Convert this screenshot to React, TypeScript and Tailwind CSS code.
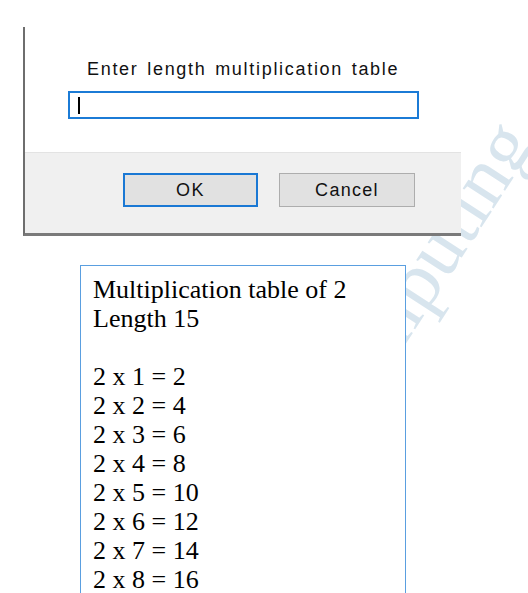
const rows = Array.from({ length: 8 }, (_, i) => `2 x ${i + 1} = ${2 * (i + 1)}`);

function PromptDialog() {
  return (
    <div className="relative z-10 ml-[23px] mt-[27px] w-[438px] border-l-2 border-b-[3px] border-l-[#6e6e6e] border-b-[#7a7a7a] bg-white font-['Liberation_Sans',Arial,sans-serif] text-[#111]">
      {/* Body */}
      <div className="h-[125px] pl-[43px] pt-[32px]">
        <p className="ml-[19px] text-[18px] leading-[21px] tracking-[1.7px] [word-spacing:2px]">
          Enter length multiplication table
        </p>
        <div className="mt-[11px] flex h-[28px] w-[351px] items-center border-2 border-[#1b7bd6] bg-white pl-[8px]">
          <span className="h-[17px] w-[2px] bg-black" />
        </div>
      </div>

      {/* Footer */}
      <div className="flex h-[81px] items-start gap-[21px] border-t border-[#e3e3e3] bg-[#f0f0f0] pl-[98px] pt-[20px]">
        <button className="flex h-[34px] w-[135px] items-center justify-center border-2 border-[#1a78d4] bg-[#e1e1e1] text-[18px] tracking-[1.5px]">
          OK
        </button>
        <button className="flex h-[34px] w-[136px] items-center justify-center border border-[#adadad] bg-[#e1e1e1] text-[18px] tracking-[1.3px]">
          Cancel
        </button>
      </div>
    </div>
  );
}

function OutputBox() {
  return (
    <div className="relative z-10 ml-[80px] mt-[29px] h-[340px] w-[326px] border-[1.5px] border-[#5a9fe0] bg-white pl-[12px] pt-[9px] font-['Liberation_Serif','Times_New_Roman',serif] text-[26px] leading-[29px] text-black">
      <div>Multiplication table of 2</div>
      <div>Length 15</div>
      <div className="h-[29px]" />
      {rows.map((r) => (
        <div key={r}>{r}</div>
      ))}
    </div>
  );
}

export default function App() {
  return (
    <div className="relative h-[593px] w-[528px] overflow-hidden bg-white">
      {/* Watermark */}
      <div className="pointer-events-none absolute left-[351px] top-[372px] h-[80px] origin-bottom-left -rotate-[57deg] select-none whitespace-nowrap font-['Liberation_Serif',serif] text-[80px] leading-none text-[#d8e5ee]">
        Computing
      </div>

      <PromptDialog />
      <OutputBox />
    </div>
  );
}
